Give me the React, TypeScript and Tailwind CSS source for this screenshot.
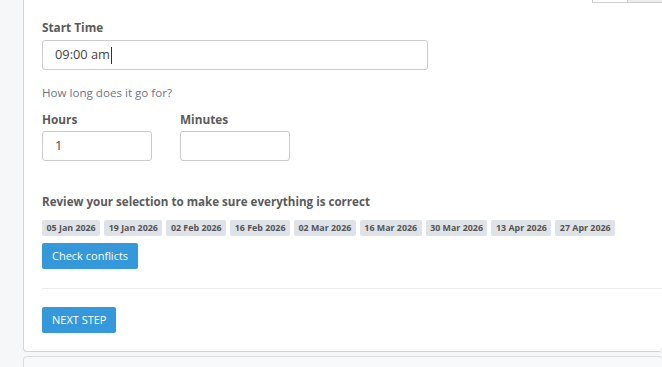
export default function App() {
  const dates = [
    '05 Jan 2026',
    '19 Jan 2026',
    '02 Feb 2026',
    '16 Feb 2026',
    '02 Mar 2026',
    '16 Mar 2026',
    '30 Mar 2026',
    '13 Apr 2026',
    '27 Apr 2026',
  ]

  return (
    <main className="h-[367px] w-[662px] overflow-hidden bg-[#f6f7f9] font-['Open_Sans',sans-serif] text-[#5a5a5a]">
      <div className="ml-[23px] flex flex-col">
        <div className="relative rounded-b-[4px] border border-t-0 border-r-0 border-[#d4d4d4] bg-white pl-[18px] pb-[18px]">
          <div className="absolute right-0 top-0 flex">
            <div className="h-[3px] w-[36px] border border-t-0 border-[#cfcfcf] bg-white" />
            <div className="h-[3px] w-[34px] border-b border-[#cfcfcf] bg-[#ececec]" />
          </div>

          <label className="block pt-[18px] text-[11.8px] font-bold leading-[18px]">Start Time</label>
          <div className="mt-[4px] flex h-[30px] w-[386px] items-center rounded-[3px] border border-[#cccccc] px-[12px] text-[12.8px] text-[#444]">
            09:00 am<span className="ml-px h-[17px] w-px bg-[#333]" />
          </div>

          <p className="mt-[14px] text-[11.6px] leading-[18px] text-[#6b7684]">How long does it go for?</p>

          <div className="mt-[8px] flex gap-[28px]">
            <div>
              <label className="block text-[11.8px] font-bold leading-[18px]">Hours</label>
              <div className="mt-[3px] flex h-[30px] w-[110px] items-center rounded-[3px] border border-[#cccccc] px-[12px] text-[12.8px] text-[#444]">
                1
              </div>
            </div>
            <div>
              <label className="block text-[11.8px] font-bold leading-[18px]">Minutes</label>
              <div className="mt-[3px] h-[30px] w-[110px] rounded-[3px] border border-[#cccccc]" />
            </div>
          </div>

          <p className="mt-[32px] text-[11.6px] font-bold leading-[18px]">
            Review your selection to make sure everything is correct
          </p>

          <div className="mt-[9px] flex gap-[4px]">
            {dates.map(d => (
              <span
                key={d}
                className="flex h-[16px] items-center rounded-[2px] bg-[#dfe2e6] px-[4.5px] text-[8.9px] font-bold text-[#555]"
              >
                {d}
              </span>
            ))}
          </div>

          <button className="mt-[7px] flex h-[26px] items-center rounded-[2px] bg-[#3498db] px-[10px] text-[11px] text-white">
            Check conflicts
          </button>

          <div className="mt-[19px] border-t border-[#ececec]" />

          <button className="mt-[18px] flex h-[26px] items-center rounded-[2px] bg-[#3498db] px-[10px] text-[11px] text-white">
            NEXT STEP
          </button>
        </div>

        <div className="mt-[4px] h-[20px] rounded-t-[4px] border border-r-0 border-[#dcdcdc] bg-[#f8f9fa]" />
      </div>
    </main>
  )
}
